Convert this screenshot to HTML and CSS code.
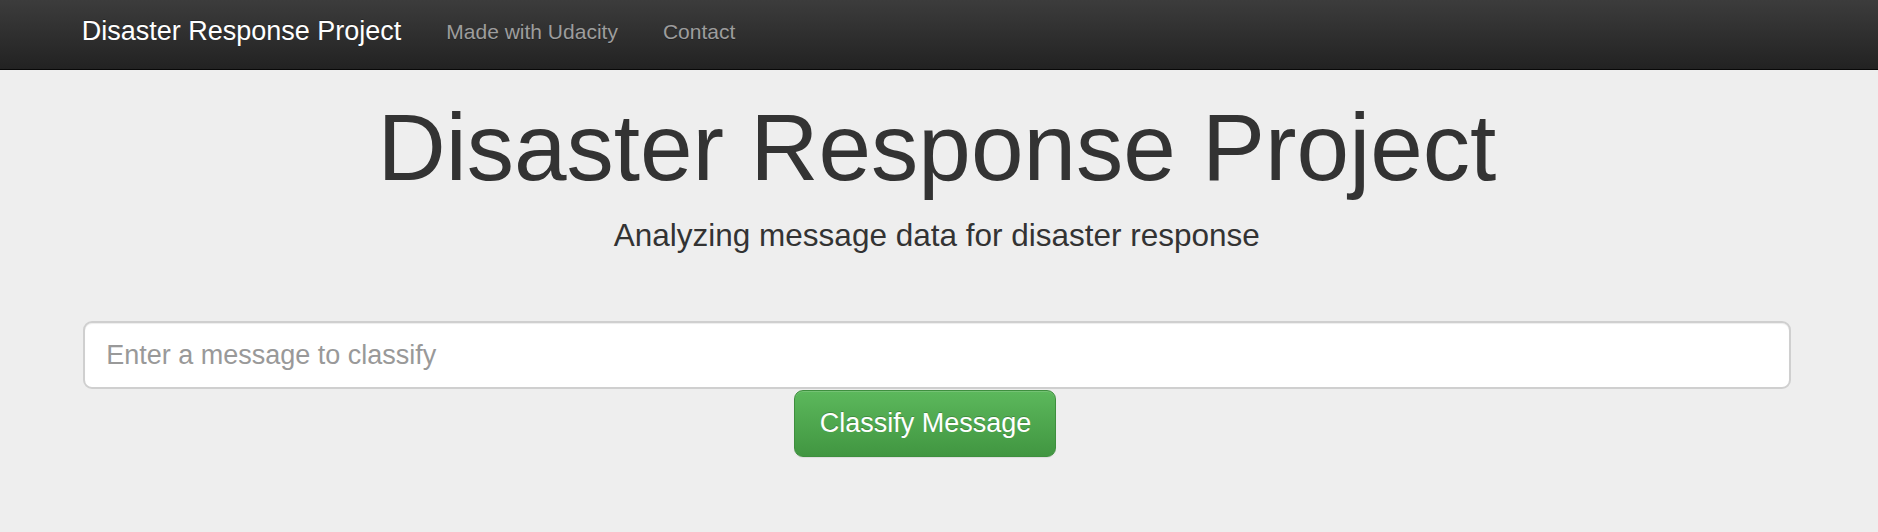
FILE: index.html
```html
<!DOCTYPE html>
<html lang="en">
<head>
<meta charset="utf-8">
<title>Disaster Response Project</title>
<link rel="stylesheet" href="styles.css">
</head>
<body>
  <nav class="navbar">
    <a class="brand" href="#">Disaster Response Project</a>
    <a class="nav-link" href="#">Made with Udacity</a>
    <a class="nav-link" href="#">Contact</a>
  </nav>
  <main class="jumbotron">
    <h1 class="title">Disaster Response Project</h1>
    <p class="lead">Analyzing message data for disaster response</p>
    <form class="classify-form">
      <input class="message-input" type="text" name="query" placeholder="Enter a message to classify">
      <div class="btn-wrap">
        <button type="button" class="btn-success">Classify Message</button>
      </div>
    </form>
  </main>
</body>
</html>
```

FILE: styles.css
```css
html, body {
  margin: 0;
  padding: 0;
}
body {
  background: #eeeeee;
  font-family: "Liberation Sans", Arial, Helvetica, sans-serif;
  color: #333333;
  height: 532px;
  overflow: hidden;
}
.navbar {
  height: 69px;
  border-bottom: 1px solid #080808;
  background: linear-gradient(to bottom, #3c3c3c 0%, #222222 100%);
  display: flex;
  align-items: flex-start;
  padding-left: 81.7px;
  box-sizing: content-box;
}
.brand {
  color: #ffffff;
  text-decoration: none;
  font-size: 27px;
  line-height: 30px;
  padding-top: 16px;
  padding-right: 22.5px;
  text-shadow: 0 -1px 0 rgba(0, 0, 0, 0.25);
  white-space: nowrap;
}
.nav-link {
  color: #9d9d9d;
  text-decoration: none;
  font-size: 21px;
  line-height: 30px;
  padding: 17px 22.5px 0;
  text-shadow: 0 1px 0 rgba(0, 0, 0, 0.25);
  white-space: nowrap;
}
.jumbotron {
  padding: 0 87px 0 82.7px;
}
.title {
  margin: 25.3px 0 0;
  font-size: 94.5px;
  line-height: 104px;
  font-weight: 500;
  text-align: center;
  color: #333333;
}
.lead {
  margin: 13.3px 0 0;
  font-size: 31.5px;
  line-height: 45px;
  text-align: center;
  color: #333333;
}
.classify-form {
  margin-top: 63.5px;
}
.message-input {
  display: block;
  width: 100%;
  box-sizing: border-box;
  height: 68px;
  margin: 0;
  padding: 0 20px 0 21.5px;
  border: 2px solid #cfcfcf;
  border-radius: 9px;
  background: #ffffff;
  font-family: "Liberation Sans", Arial, Helvetica, sans-serif;
  font-size: 27px;
  color: #555555;
  box-shadow: inset 0 1px 1px rgba(0, 0, 0, 0.075);
  outline: none;
}
.message-input::placeholder {
  color: #999999;
}
.btn-wrap {
  margin-left: 41.6667%;
  padding-top: 0.5px;
}
.btn-success {
  display: block;
  height: 67px;
  width: 262px;
  box-sizing: border-box;
  padding: 0 24px;
  border: 1.5px solid #3e8f3e;
  border-radius: 9px;
  background: linear-gradient(to bottom, #5cb85c 0%, #419641 100%);
  color: #ffffff;
  font-family: "Liberation Sans", Arial, Helvetica, sans-serif;
  font-size: 27px;
  line-height: 1;
  text-shadow: 0 -1px 0 rgba(0, 0, 0, 0.2);
  box-shadow: inset 0 1px 0 rgba(255, 255, 255, 0.15), 0 1px 1px rgba(0, 0, 0, 0.075);
  cursor: pointer;
}
```
